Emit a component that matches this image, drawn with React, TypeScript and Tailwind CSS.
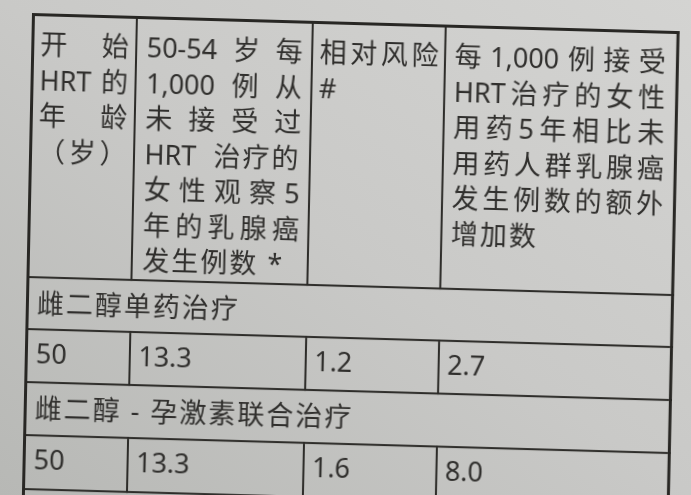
import React from 'react';

const font = { fontFamily: '"Noto Sans", "Noto Sans CJK SC", sans-serif' };

// one justified line: the pieces are spread across the cell width
const Line: React.FC<{ parts: string[] }> = ({ parts }) => (
  <div className="flex justify-between">
    {parts.map((p, i) => (
      <span key={i} className={p.length > 1 && !/[0-9A-Z]/.test(p) ? 'tracking-[2px]' : ''}>
        {p}
      </span>
    ))}
  </div>
);

const headCell = 'align-top border-2 border-[#2c2b28] pt-[10px]';
const rowCell = 'align-top border-2 border-[#2c2b28] pl-[8px] pt-[5px]';

export default function App() {
  return (
    <div
      className="h-[495px] w-full overflow-hidden bg-linear-to-bl from-[#d4d4d2] via-[#c9c9c7] to-[#b7b8b5] pl-[32px] pt-[13px] text-[27px] leading-[35.5px] text-[#302f2d]"
      style={font}
    >
      <table className="w-[645px] table-fixed border-collapse border-[3px] border-[#282724] origin-top-left skew-y-[1.6deg] skew-x-[-1.2deg] blur-[0.3px]">
        <colgroup>
          <col className="w-[103px]" />
          <col className="w-[176px]" />
          <col className="w-[133px]" />
          <col className="w-[233px]" />
        </colgroup>
        <tbody>
          <tr className="h-[262px]">
            <td className={`${headCell} pl-[6px] pr-[6px]`}>
              <Line parts={['开', '始']} />
              <Line parts={['HRT', '的']} />
              <Line parts={['年', '龄']} />
              <Line parts={['（', '岁', '）']} />
            </td>
            <td className={`${headCell} pl-[10px] pr-[8px]`}>
              <Line parts={['50-54', '岁', '每']} />
              <Line parts={['1,000', '例', '从']} />
              <Line parts={['未', '接', '受', '过']} />
              <Line parts={['HRT', '治疗的']} />
              <Line parts={['女', '性', '观', '察', '5']} />
              <Line parts={['年', '的', '乳', '腺', '癌']} />
              <div className="tracking-[2px]">发生例数 *</div>
            </td>
            <td className={`${headCell} pl-[7px] pr-[5px]`}>
              <Line parts={['相', '对', '风', '险']} />
              <div>#</div>
            </td>
            <td className={`${headCell} pl-[9px] pr-[10px]`}>
              <Line parts={['每', '1,000', '例', '接', '受']} />
              <Line parts={['HRT', '治', '疗', '的', '女', '性']} />
              <Line parts={['用', '药', '5', '年', '相', '比', '未']} />
              <Line parts={['用', '药', '人', '群', '乳', '腺', '癌']} />
              <Line parts={['发', '生', '例', '数', '的', '额', '外']} />
              <div className="tracking-[2px]">增加数</div>
            </td>
          </tr>

          <tr className="h-[52px]">
            <td colSpan={4} className={`${rowCell} pt-[7px] tracking-[2px]`}>
              雌二醇单药治疗
            </td>
          </tr>
          <tr className="h-[53px]">
            <td className={rowCell}>50</td>
            <td className={rowCell}>13.3</td>
            <td className={rowCell}>1.2</td>
            <td className={rowCell}>2.7</td>
          </tr>

          <tr className="h-[53px]">
            <td colSpan={4} className={`${rowCell} pt-[7px] tracking-[2px]`}>
              雌二醇 - 孕激素联合治疗
            </td>
          </tr>
          <tr className="h-[54px]">
            <td className={rowCell}>50</td>
            <td className={rowCell}>13.3</td>
            <td className={rowCell}>1.6</td>
            <td className={rowCell}>8.0</td>
          </tr>

          <tr className="h-[52px]">
            <td colSpan={4} className={rowCell}>&nbsp;</td>
          </tr>
        </tbody>
      </table>
    </div>
  );
}
